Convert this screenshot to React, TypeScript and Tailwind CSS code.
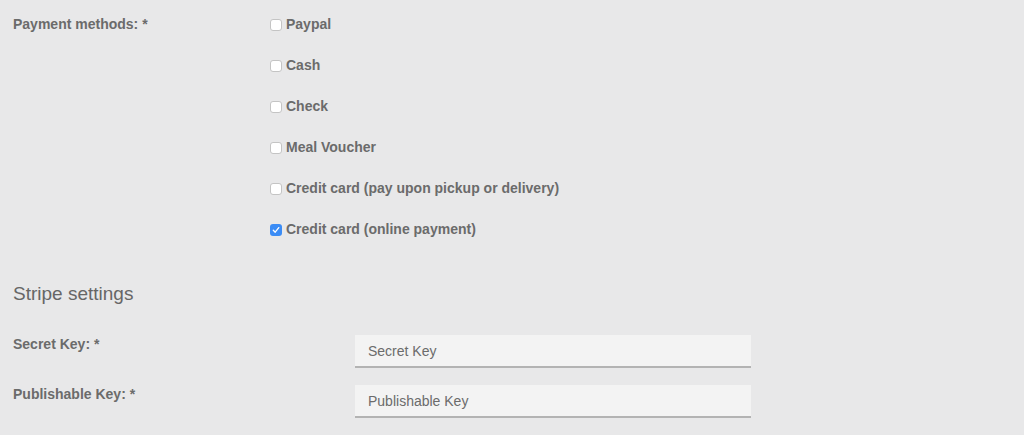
import React from "react";

const methods = [
  { label: "Paypal", checked: false },
  { label: "Cash", checked: false },
  { label: "Check", checked: false },
  { label: "Meal Voucher", checked: false },
  { label: "Credit card (pay upon pickup or delivery)", checked: false },
  { label: "Credit card (online payment)", checked: true },
];

function Box({ checked }: { checked: boolean }) {
  if (checked) {
    return (
      <span className="w-[12px] h-[12px] rounded-[3px] bg-[#3b8cf5] flex items-center justify-center shrink-0">
        <svg width="8" height="8" viewBox="0 0 8 8" fill="none">
          <path d="M1.3 4.3 L3.2 6.2 L6.8 1.6" stroke="white" strokeWidth="1.3" strokeLinecap="round" strokeLinejoin="round" />
        </svg>
      </span>
    );
  }
  return <span className="w-[12px] h-[12px] rounded-[3px] bg-white border border-[#c4c4c4] shrink-0" />;
}

export default function App() {
  return (
    <div
      className="w-[1024px] h-[435px] bg-[#e8e8e9] text-[#6b6b6b] overflow-hidden"
      style={{ fontFamily: '"Liberation Sans", Arial, sans-serif' }}
    >
      <div className="flex pt-[4px]">
        <div className="w-[270px] pl-[13px] h-[41px] flex items-center text-[14px] font-bold">
          Payment methods: *
        </div>
        <div className="flex flex-col">
          {methods.map(m => (
            <label key={m.label} className="h-[41px] flex items-center gap-[4px] text-[14px] font-bold">
              <Box checked={m.checked} />
              <span>{m.label}</span>
            </label>
          ))}
        </div>
      </div>

      <h2 className="mt-[32px] pl-[13px] text-[19px] leading-[24px] text-[#666666]">Stripe settings</h2>

      <div className="mt-[29px] flex flex-col gap-[17px]">
        {["Secret Key", "Publishable Key"].map(k => (
          <div key={k} className="flex">
            <div className="w-[355px] pl-[13px] pt-[1px] text-[14px] leading-[16px] font-bold">{k}: *</div>
            <input
              placeholder={k}
              className="w-[396px] h-[33px] bg-[#f3f3f3] border-b-2 border-[#b3b3b3] px-[13px] text-[14px] placeholder:text-[#6b6b6b] outline-none"
            />
          </div>
        ))}
      </div>
    </div>
  );
}
